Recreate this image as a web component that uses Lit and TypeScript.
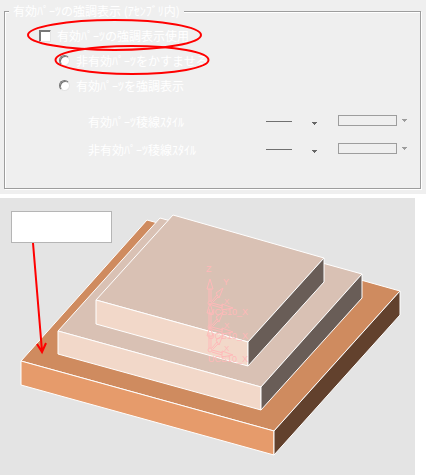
import { LitElement, html, css, svg } from "lit";
import { customElement } from "lit/decorators.js";

@customElement("highlight-options")
class HighlightOptions extends LitElement {
  static styles = css`
    :host {
      display: block;
      position: relative;
      background: #efefef;
      padding: 3px 5px 5px 4px;
      color: #fff;
      font: 12px/16px "Noto Sans CJK JP", sans-serif;
      white-space: nowrap;
    }
    .group {
      margin: 0;
      min-width: 0;
      padding: 4px 10px 30px 34px;
      border: 1px solid #9d9d9d;
      box-shadow: 1px 1px 0 #fff, inset 1px 1px 0 #fff;
    }
    .legend {
      margin-left: -30px;
      padding: 0 4px;
      background: #efefef;
    }
    .choice {
      display: flex;
      align-items: center;
      gap: 6px;
      height: 25px;
    }
    .nested {
      margin-left: 20px;
    }
    .mark {
      appearance: none;
      box-sizing: border-box;
      margin: 0;
      width: 12px;
      height: 12px;
      background: #fff;
      border: 1px solid;
      border-color: #777 #e4e4e4 #e4e4e4 #777;
      box-shadow: inset 1px 1px 0 #777;
    }
    .round {
      width: 11px;
      height: 11px;
      border-radius: 50%;
    }
    .styles {
      display: grid;
      grid-template-columns: 1fr 52px 72px;
      column-gap: 20px;
      row-gap: 12px;
      align-items: center;
      margin: 16px 0 0 49px;
    }
    .pick {
      display: grid;
      align-items: center;
    }
    .pick > * {
      grid-area: 1 / 1;
    }
    .pick select {
      appearance: none;
      width: 100%;
      height: 16px;
      padding: 0;
      border: 0;
      background: transparent;
    }
    svg {
      display: block;
      pointer-events: none;
    }
    .rings {
      position: absolute;
      left: 0;
      top: 0;
    }
  `;

  private styleRow(label: string, id: string) {
    return html`
      <label for=${id}>${label}</label>
      <span class="pick">
        <select id=${id}></select>
        <svg width="52" height="16">
          <path d="M0 7.5H26" stroke="#707070" />
          <path d="M46 8h5v1h-1v1h-1v1h-1v-1h-1v-1h-1z" fill="#666" />
        </svg>
      </span>
      <span class="pick">
        <select aria-label=${label} disabled></select>
        <svg width="72" height="16">
          <rect x="0.5" y="1.5" width="58" height="10" fill="none" stroke="#9d9d9d" />
          <path d="M64 5h5v1h-1v1h-1v1h-1v-1h-1v-1h-1z" fill="#9d9d9d" />
        </svg>
      </span>
    `;
  }

  render() {
    return html`
      <fieldset class="group">
        <legend class="legend">有効ﾊﾟｰﾂの強調表示 (ｱｾﾝﾌﾞﾘ内)</legend>
        <label class="choice"><input class="mark" type="checkbox" />有効ﾊﾟｰﾂの強調表示使用</label>
        <label class="choice nested"><input class="mark round" type="radio" name="mode" />非有効ﾊﾟｰﾂをかすませる</label>
        <label class="choice nested"><input class="mark round" type="radio" name="mode" />有効ﾊﾟｰﾂを強調表示</label>
        <div class="styles">
          ${this.styleRow("有効ﾊﾟｰﾂ稜線ｽﾀｲﾙ", "active-line")}
          ${this.styleRow("非有効ﾊﾟｰﾂ稜線ｽﾀｲﾙ", "inactive-line")}
        </div>
      </fieldset>
      <svg class="rings" width="220" height="80" fill="none" stroke="#f00" stroke-width="2">
        <ellipse cx="114.5" cy="35" rx="86.5" ry="15" />
        <ellipse cx="132" cy="60" rx="76.5" ry="14" />
      </svg>
    `;
  }
}

@customElement("part-view")
class PartView extends LitElement {
  static styles = css`
    :host {
      display: block;
      margin: 4px 11px 0 0;
      background: #e4e4e4;
    }
    svg {
      display: block;
      max-width: 100%;
    }
    .edge {
      stroke: #fff;
      stroke-linejoin: round;
    }
    .axis {
      fill: none;
      stroke: #ffb9b9;
    }
    .tag {
      fill: #ffb9b9;
      font: 9px "Liberation Sans", sans-serif;
    }
    .small {
      font-size: 8px;
    }
  `;

  private triad(y: number) {
    return svg`
      <g transform="translate(210 ${y})">
        <circle class="axis" cx="0" cy="0" r="2" />
        <path class="axis" d="M-1 -2V-14M1 -2V-14M-3 -14H3L0 -24Z M2 -2L7 -8M3 -1L8 -6M6 -10L13 -15L9 -5Z M2 0L13 3M2 2L12 5M12 1L23 5L12 7Z" />
        <text class="tag" x="-2" y="12">UCS10_X</text>
        <text class="tag small" x="14" y="1">X</text>
      </g>`;
  }

  render() {
    return html`
      <svg width="415" height="277" viewBox="0 198 415 277" role="img" aria-label="3D">
        <g class="edge">
          <path fill="#cf8b5f" d="M21 361L147 220L400 291L274 431Z" />
          <path fill="#e69b6b" d="M21 361L274 431V455L21 385Z" />
          <path fill="#62412d" d="M400 291V315L274 455V431Z" />
          <path fill="#d9c1b4" d="M58 331L160 218L362 274L261 387Z" />
          <path fill="#f2d8c9" d="M58 331L261 387V410L58 354Z" />
          <path fill="#695d57" d="M362 274V298L261 410V387Z" />
          <path fill="#d9c1b4" d="M96 300L173 215L324 258L248 342Z" />
          <path fill="#f2d8c9" d="M96 300L248 342V366L96 324Z" />
          <path fill="#695d57" d="M324 258V282L248 366V342Z" />
        </g>
        <text class="tag" x="206" y="272">Z</text>
        <text class="tag" x="223" y="285">Y</text>
        ${this.triad(303)}${this.triad(327)}${this.triad(350)}
        <rect x="11.5" y="211.5" width="100" height="31" fill="#fff" stroke="#b5b5b5" />
        <path d="M33 243L42 351M37 344L42 352L46 343" fill="none" stroke="#f00" stroke-width="2" />
      </svg>
    `;
  }
}

@customElement("app-root")
class AppRoot extends LitElement {
  static styles = css`
    :host {
      display: block;
      background: #fff;
    }
  `;

  render() {
    return html`<highlight-options></highlight-options><part-view></part-view>`;
  }
}
